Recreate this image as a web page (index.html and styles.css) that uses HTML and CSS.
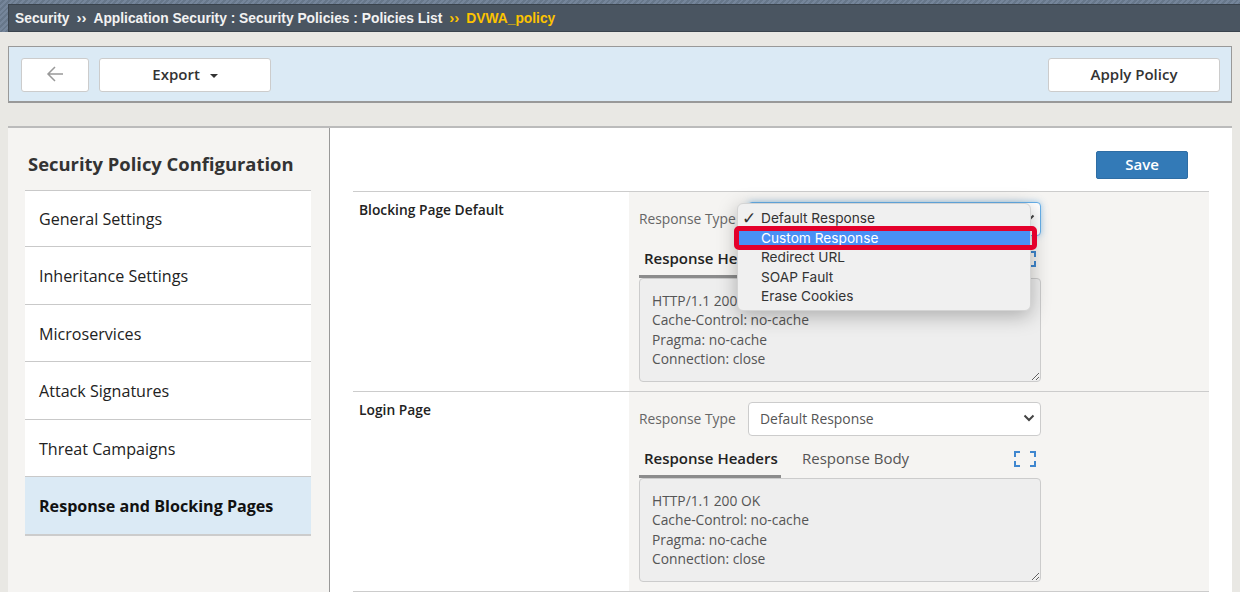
FILE: index.html
```html
<!DOCTYPE html>
<html lang="en">
    <head>
        <meta charset="UTF-8">
        <title>DVWA_policy</title>
        <link rel="stylesheet" href="styles.css">
    </head>
    <body>
        <div class="topband">
            <div class="crumbs">
                <span>Security</span>
                <span class="sep">››</span>
                <span>Application Security : Security Policies : Policies List</span>
                <span class="sep gold">››</span>
                <span class="gold">DVWA_policy</span>
            </div>
        </div>

        <div class="toolbar">
            <button class="btn btn-back" type="button">
                <svg width="18" height="16" viewBox="0 0 18 16" fill="none" stroke="#999" stroke-width="1.5"><path d="M17 8H2M9 1L2 8l7 7"/></svg>
            </button>
            <button class="btn btn-wide" type="button">Export <span class="caret"></span></button>
            <button class="btn btn-wide btn-right" type="button">Apply Policy</button>
        </div>

        <div class="page">
            <div class="side">
                <h2>Security Policy Configuration</h2>
                <ul class="menu">
                    <li>General Settings</li>
                    <li>Inheritance Settings</li>
                    <li>Microservices</li>
                    <li>Attack Signatures</li>
                    <li>Threat Campaigns</li>
                    <li class="on">Response and Blocking Pages</li>
                </ul>
            </div>

            <div class="main">
                <div class="savebar"><button class="save" type="button">Save</button></div>

                <div class="row">
                    <div class="rowlabel">Blocking Page Default</div>
                    <div class="panel">
                        <div class="typeline">
                            <label>Response Type</label>
                            <div class="select focus">
                                <div class="popup">
                                    <div class="opt"><span class="tick">✓</span>Default Response</div>
                                    <div class="opt hit">Custom Response<i class="redbox"></i></div>
                                    <div class="opt">Redirect URL</div>
                                    <div class="opt">SOAP Fault</div>
                                    <div class="opt">Erase Cookies</div>
                                </div>
                                <svg class="chev" width="12" height="8" viewBox="0 0 12 8" fill="none" stroke="#444" stroke-width="2"><path d="M1.5 1.5L6 6l4.5-4.5"/></svg>
                            </div>
                        </div>
                        <div class="tabs">
                            <span class="tab active">Response Headers</span>
                            <span class="tab">Response Body</span>
                            <svg class="expand" width="22" height="16" viewBox="0 0 22 16" fill="none" stroke="#3f87cf" stroke-width="2"><path d="M1 6V1h5M16 1h5v5M21 10v5h-5M6 15H1v-5"/></svg>
                        </div>
                        <textarea class="headers" readonly>HTTP/1.1 200 OK
Cache-Control: no-cache
Pragma: no-cache
Connection: close</textarea>
                    </div>
                </div>

                <div class="row">
                    <div class="rowlabel">Login Page</div>
                    <div class="panel">
                        <div class="typeline">
                            <label>Response Type</label>
                            <div class="select">
                                Default Response
                                <svg class="chev" width="12" height="8" viewBox="0 0 12 8" fill="none" stroke="#444" stroke-width="2"><path d="M1.5 1.5L6 6l4.5-4.5"/></svg>
                            </div>
                        </div>
                        <div class="tabs">
                            <span class="tab active">Response Headers</span>
                            <span class="tab">Response Body</span>
                            <svg class="expand" width="22" height="16" viewBox="0 0 22 16" fill="none" stroke="#3f87cf" stroke-width="2"><path d="M1 6V1h5M16 1h5v5M21 10v5h-5M6 15H1v-5"/></svg>
                        </div>
                        <textarea class="headers" readonly>HTTP/1.1 200 OK
Cache-Control: no-cache
Pragma: no-cache
Connection: close</textarea>
                    </div>
                </div>
            </div>
        </div>
    </body>
</html>
```

FILE: styles.css
```css
* {
    box-sizing: border-box;
}

html, body {
    height: 592px;
    overflow: hidden;
}

body {
    margin: 0;
    background-color: #e9e8e4;
    font-family: "Open Sans", "Liberation Sans", sans-serif;
    color: #333;
}

/* breadcrumb */
.topband {
    height: 32px;
    padding: 4px 0 0 8px;
    background: repeating-linear-gradient(135deg, #75859a 0, #75859a 2px, #67778a 2px, #67778a 4px);
}

.crumbs {
    display: flex;
    align-items: center;
    gap: 7px;
    height: 28px;
    padding-left: 6px;
    background-color: #4a5561;
    border: 1px solid #3a434d;
    border-right: 0;
    font-family: "Liberation Sans", Arial, sans-serif;
    font-size: 13.8px;
    font-weight: bold;
    color: #f2f2f2;
}

.sep {
    font-size: 15px;
    line-height: 20px;
}

.gold {
    color: #fdc300;
}

/* toolbar */
.toolbar {
    display: flex;
    gap: 10px;
    height: 57px;
    margin: 14px 8px 0;
    padding: 11px 11px 0 12px;
    background-color: #dbeaf5;
    border: 1px solid #999;
    border-bottom-width: 2px;
}

.btn {
    height: 34px;
    padding-bottom: 3px;
    background-color: #fff;
    border: 1px solid #ccc;
    border-radius: 3px;
    font-family: inherit;
    font-size: 15px;
    font-weight: 600;
    color: #333;
}

.btn-back {
    width: 68px;
    padding: 2px 0 0;
}

.btn-wide {
    width: 172px;
}

.btn-right {
    margin-left: auto;
}

.caret {
    display: inline-block;
    margin-left: 6px;
    vertical-align: 2px;
    border-top: 4px solid #333;
    border-left: 4px solid transparent;
    border-right: 4px solid transparent;
}

/* page */
.page {
    display: flex;
    height: 466px;
    margin: 23px 8px 0;
    background-color: #fff;
    border-top: 2px solid #bbb;
}

.side {
    width: 322px;
    padding: 0 17px;
    background-color: #f5f4f2;
    border-right: 1px solid #999;
}

.side h2 {
    height: 62px;
    margin: 0;
    padding: 24px 0 0 3px;
    font-size: 18.4px;
    line-height: 24px;
    font-weight: bold;
    color: #333;
}

.menu {
    margin: 0;
    padding: 0;
    list-style: none;
    border-bottom: 2px solid #ccc;
    width: 286px;
}

.menu li {
    height: 57.5px;
    padding-left: 14px;
    background-color: #fff;
    border-top: 1px solid #c9c9c9;
    font-size: 16.1px;
    line-height: 58px;
    color: #222;
}

.menu li:first-child {
    height: 56.4px;
    line-height: 56px;
}

.menu li.on {
    background-color: #dbeaf5;
    font-weight: bold;
    color: #111;
}

/* main */
.main {
    width: 902px;
    padding: 0 23px;
}

.savebar {
    display: flex;
    justify-content: flex-end;
    height: 63px;
    padding: 23px 21px 0 0;
}

.save {
    width: 92px;
    height: 28px;
    padding-bottom: 3px;
    background-color: #337ab7;
    border: 1px solid #2e6da4;
    border-radius: 2px;
    font-family: inherit;
    font-size: 15px;
    font-weight: 600;
    color: #fff;
}

.row {
    display: flex;
    height: 200px;
    border-top: 1px solid #ccc;
}

.row:last-child {
    height: 201px;
    border-bottom: 1px solid #ccc;
}

.rowlabel {
    width: 276px;
    padding: 9px 0 0 6px;
    font-size: 13.8px;
    line-height: 18px;
    font-weight: 600;
    color: #222;
}

.panel {
    position: relative;
    flex: 1;
    padding: 10px 168px 0 10px;
    background-color: #f5f4f2;
}

.typeline {
    display: flex;
    align-items: center;
}

.typeline label {
    width: 109px;
    padding-bottom: 2px;
    font-size: 13.8px;
    color: #666;
}

.select {
    position: relative;
    display: flex;
    align-items: center;
    justify-content: space-between;
    flex: 1;
    height: 34px;
    padding: 0 5px 2px 11px;
    background-color: #fff;
    border: 1px solid #ccc;
    border-radius: 4px;
    font-size: 13.9px;
    color: #555;
}

.select.focus {
    border-color: #66afe9;
    box-shadow: 0 0 6px rgba(102, 175, 233, .6);
}

.chev {
    margin-left: auto;
}

/* open dropdown, lies over the select and the tabs */
.popup {
    position: absolute;
    z-index: 5;
    top: 0;
    left: -12px;
    width: 294px;
    padding: 5px 0 3px;
    background-color: #f0f0f0;
    border: 1px solid #d4d4d4;
    border-radius: 6px;
    box-shadow: 0 5px 20px rgba(0, 0, 0, .28);
    font-family: Inter, "Liberation Sans", sans-serif;
    font-size: 13.7px;
    line-height: 19.5px;
    color: #333;
}

.opt {
    position: relative;
    height: 19.5px;
    padding-left: 23px;
}

.tick {
    position: absolute;
    left: 4px;
    font-family: "DejaVu Sans", sans-serif;
    font-size: 17px;
}

.hit {
    background-color: #4a90f5;
    color: #fff;
}

.redbox {
    position: absolute;
    top: -3px;
    bottom: -2px;
    left: -4px;
    right: -7px;
    border: 5px solid #e4002b;
    border-radius: 5px;
}

.tabs {
    position: relative;
    display: flex;
    align-items: flex-end;
    height: 42px;
}

.tab {
    height: 34px;
    padding: 4px 5px 0;
    font-size: 15px;
    line-height: 20px;
    white-space: nowrap;
    color: #555;
}

.tab + .tab {
    margin-left: 16px;
}

.tab.active {
    padding: 4px 4px 0 5px;
    width: 142px;
    border-bottom: 3px solid #8c8c8c;
    font-weight: 600;
    color: #222;
}

.expand {
    position: absolute;
    top: 15px;
    right: 5px;
}

.headers {
    display: block;
    width: 402px;
    height: 104px;
    padding: 11.7px 12px;
    background-color: #eee;
    border: 1px solid #ccc;
    border-radius: 4px;
    outline: 0;
    font-family: inherit;
    font-size: 13.8px;
    line-height: 19.6px;
    color: #555;
}
```
